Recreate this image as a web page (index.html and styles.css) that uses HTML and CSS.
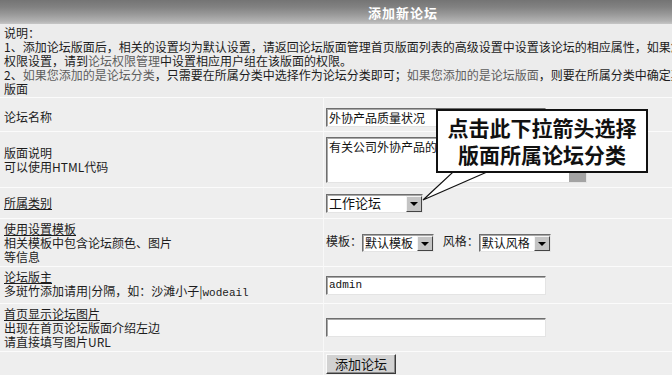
FILE: index.html
```html
<!DOCTYPE html>
<html lang="zh-CN">
<head>
  <meta charset="UTF-8">
  <title>添加新论坛</title>
  <link rel="stylesheet" href="styles.css">
</head>
<body>

  <div class="page">
    <table class="board-table">
      <colgroup>
        <col class="label-col">
        <col>
      </colgroup>
      <tr>
        <th colspan="2" class="title-bar">添加新论坛</th>
      </tr>
      <tr>
        <td colspan="2" class="notes">
          说明：<br>
          1、添加论坛版面后，相关的设置均为默认设置，请返回论坛版面管理首页版面列表的高级设置中设置该论坛的相应属性，如果您需要设置该论坛的<br>
          权限设置，请到<span class="link">论坛权限管理</span>中设置相应用户组在该版面的权限。<br>
          2、<span class="link">如果您添加的是论坛分类</span>，只需要在所属分类中选择作为论坛分类即可；<span class="link">如果您添加的是论坛版面</span>，则要在所属分类中确定其所属论坛<br>
          版面
        </td>
      </tr>
      <tr class="row-name">
        <td class="label">论坛名称</td>
        <td class="field"><input class="text-input" type="text" value="外协产品质量状况"></td>
      </tr>
      <tr class="row-desc">
        <td class="label">版面说明<br>可以使用HTML代码</td>
        <td class="field">
          <span class="area-wrap">
            <textarea class="text-area">有关公司外协产品的质量状况</textarea>
            <span class="scroll-thumb"></span>
          </span>
        </td>
      </tr>
      <tr class="row-cat">
        <td class="label"><span class="tip">所属类别</span></td>
        <td class="field">
          <span class="select-box wide"><select><option>工作论坛</option></select></span>
        </td>
      </tr>
      <tr class="row-skin">
        <td class="label"><span class="tip">使用设置模板</span><br>相关模板中包含论坛颜色、图片<br>等信息</td>
        <td class="field">
          模板：<span class="select-box"><select><option>默认模板</option></select></span>
          <span class="gap"></span>风格：<span class="select-box"><select><option>默认风格</option></select></span>
        </td>
      </tr>
      <tr class="row-master">
        <td class="label"><span class="tip">论坛版主</span><br>多斑竹添加请用|分隔，如：沙滩小子|<span class="mono">wodeail</span></td>
        <td class="field"><input class="text-input mono" type="text" value="admin"></td>
      </tr>
      <tr class="row-pic">
        <td class="label"><span class="tip">首页显示论坛图片</span><br>出现在首页论坛版面介绍左边<br>请直接填写图片URL</td>
        <td class="field"><input class="text-input" type="text" value=""></td>
      </tr>
      <tr class="row-submit">
        <td class="label"></td>
        <td class="field"><button class="submit-btn">添加论坛</button></td>
      </tr>
    </table>

    <svg class="callout-tail" width="80" height="40" viewBox="0 0 80 40">
      <polygon points="38,2 72,2 8,30" fill="#fff" stroke="#111" stroke-width="1.2"/>
    </svg>
    <div class="callout">点击此下拉箭头选择<br>版面所属论坛分类</div>
  </div>

</body>
</html>
```

FILE: styles.css
```css
body {
  margin: 0;
  background-color: #eeeeee;
  font-family: "Noto Sans CJK SC", sans-serif;
  font-size: 12px;
  color: #1c1c1c;
  overflow: hidden;
}

.page {
  position: relative;
  width: 806px;
}

.board-table {
  width: 806px;
  border-collapse: separate;
  border-spacing: 0;
  table-layout: fixed;
}

.label-col {
  width: 323px;
}

.title-bar {
  height: 24px;
  padding: 0;
  background: linear-gradient(to bottom, #747474 0, #828282 30%, #999 60%, #b2b2b2 88%, #c6c6c6 100%);
  color: #fff;
  font-size: 13px;
  font-weight: bold;
  text-align: center;
  letter-spacing: 1px;
}

.notes {
  height: 71px;
  padding: 2px 4px 0;
  background-color: #ececec;
  line-height: 14px;
  white-space: nowrap;
  vertical-align: top;
}

.link {
  color: #5e5e5e;
}

td.label,
td.field {
  background-color: #eeeeee;
  border-top: 1px solid #fbfbfb;
  line-height: 14px;
  vertical-align: middle;
  padding: 0 0 0 4px;
}

td.field {
  border-left: 1px solid #f8f8f8;
  padding-left: 2px;
  white-space: nowrap;
}

.tip {
  text-decoration: underline;
}

.mono {
  font-family: "Liberation Mono", monospace;
  font-size: 11px;
}

.row-name td { height: 28px; padding-top: 5px; }
.row-desc td { height: 55px; }
.row-cat td { height: 30px; }
.row-skin td { height: 47px; }
.row-master td { height: 36px; }
.row-pic td { height: 47px; }
.row-submit td { height: 28px; vertical-align: top; padding-top: 2px; }

.text-input,
.text-area {
  box-sizing: border-box;
  margin: 0;
  padding: 1px 2px;
  background-color: #fff;
  border: 1px solid;
  border-color: #6e6e6e #e4e4e4 #e4e4e4 #6e6e6e;
  box-shadow: inset 1px 1px 0 #a8a8a8;
  font-family: "Noto Sans CJK SC", sans-serif;
  font-size: 12px;
  color: #111;
  vertical-align: middle;
}

.text-input {
  width: 220px;
  height: 19px;
  line-height: 15px;
}

.text-input.mono {
  font-family: "Liberation Mono", monospace;
  font-size: 11px;
}

.area-wrap {
  position: relative;
  display: inline-block;
  vertical-align: middle;
}

.text-area {
  display: block;
  width: 261px;
  height: 46px;
  resize: none;
  overflow: hidden;
  line-height: 15px;
}

.scroll-thumb {
  position: absolute;
  right: 1px;
  bottom: 1px;
  width: 17px;
  height: 12px;
  background-color: #a3a3a3;
}

.select-box {
  position: relative;
  display: inline-block;
  vertical-align: middle;
}

.select-box select {
  appearance: none;
  -webkit-appearance: none;
  box-sizing: border-box;
  width: 72px;
  height: 18px;
  margin: 0;
  padding: 0 0 0 2px;
  background-color: #fff;
  border: 1px solid;
  border-color: #6e6e6e #e4e4e4 #e4e4e4 #6e6e6e;
  box-shadow: inset 1px 1px 0 #a8a8a8;
  border-radius: 0;
  font-family: "Noto Sans CJK SC", sans-serif;
  font-size: 12px;
  line-height: 14px;
  color: #111;
}

.select-box.wide select {
  width: 97px;
  height: 19px;
  font-size: 13px;
}

/* arrow button drawn over the right end of the select */
.select-box::after {
  content: "";
  position: absolute;
  top: 2px;
  right: 1px;
  bottom: 1px;
  width: 16px;
  box-sizing: border-box;
  border: 1px solid;
  border-color: #f4f4f4 #444 #444 #f4f4f4;
  background-color: #c4c4c4;
}

.select-box::before {
  content: "";
  position: absolute;
  z-index: 1;
  right: 5px;
  top: 50%;
  margin-top: -1px;
  border-left: 4px solid transparent;
  border-right: 4px solid transparent;
  border-top: 4px solid #000;
}

.gap {
  display: inline-block;
  width: 6px;
}

.submit-btn {
  box-sizing: border-box;
  width: 70px;
  height: 20px;
  margin: 0;
  padding: 0;
  background-color: #d2d2d2;
  border: 1px solid;
  border-color: #fafafa #3a3a3a #3a3a3a #fafafa;
  box-shadow: inset -1px -1px 0 #8a8a8a;
  font-family: "Noto Sans CJK SC", sans-serif;
  font-size: 13px;
  line-height: 16px;
  color: #111;
}

.callout {
  position: absolute;
  z-index: 2;
  left: 436px;
  top: 109px;
  box-sizing: border-box;
  width: 212px;
  height: 64px;
  padding-top: 3px;
  background-color: #fff;
  border: 2px solid #111;
  font-size: 21px;
  font-weight: bold;
  line-height: 27px;
  text-align: center;
  color: #111;
}

.callout-tail {
  position: absolute;
  z-index: 1;
  left: 415px;
  top: 170px;
}
```
